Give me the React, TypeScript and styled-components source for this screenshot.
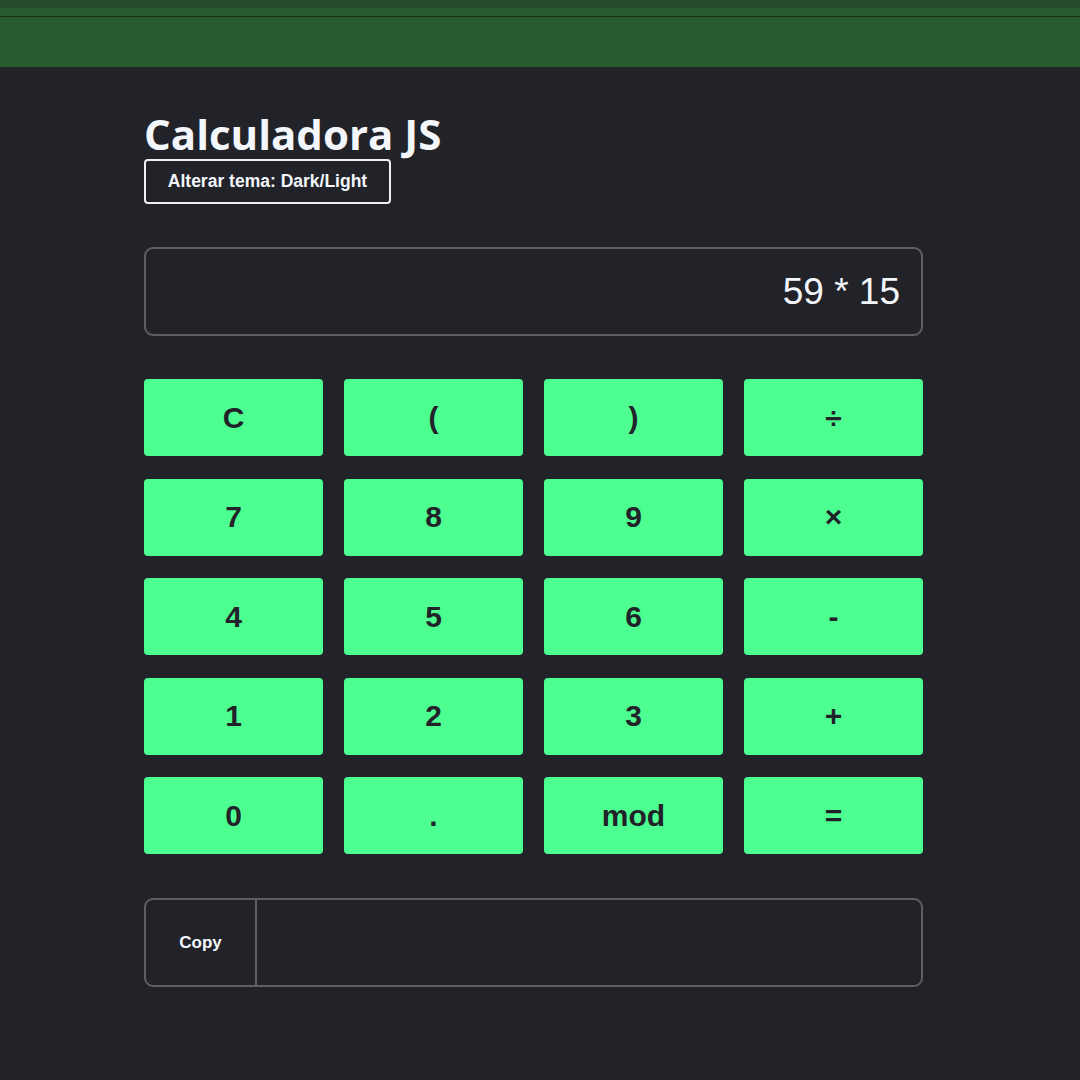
import React from "react";
import styled, { createGlobalStyle } from "styled-components";

const Global = createGlobalStyle`
  html, body { margin: 0; padding: 0; background: #212329; }
  body { font-family: "Liberation Sans", Arial, sans-serif; }
`;

const TopBar = styled.header`
  height: 67px;
  background: #285c2e;
  display: flex;
  flex-direction: column;
`;

const Strip = styled.div<{ $bg: string; $h: number }>`
  height: ${(p) => p.$h}px;
  background: ${(p) => p.$bg};
`;

const Main = styled.main`
  width: 779px;
  margin-left: 144px;
  padding-top: 44px;
  display: flex;
  flex-direction: column;
`;

const Title = styled.h1`
  margin: 0;
  font-family: "Open Sans", sans-serif;
  font-weight: 700;
  font-size: 42px;
  line-height: 46px;
  color: #f3f6fb;
  letter-spacing: 0;
`;

const ThemeButton = styled.button`
  align-self: flex-start;
  width: 247px;
  height: 45px;
  margin-top: 2px;
  background: transparent;
  border: 2px solid #f0f0f0;
  border-radius: 4px;
  color: #f3f6fb;
  font-family: "Liberation Sans", Arial, sans-serif;
  font-weight: 700;
  font-size: 17.5px;
  padding: 0;
  cursor: pointer;
`;

const Display = styled.div`
  margin-top: 43px;
  height: 89px;
  box-sizing: border-box;
  border: 2px solid #5e5f62;
  border-radius: 9px;
  display: flex;
  align-items: center;
  justify-content: flex-end;
  padding-right: 21px;
  color: #f3f6fb;
  font-size: 37px;
`;

const Keypad = styled.div`
  margin-top: 43px;
  display: grid;
  grid-template-columns: repeat(4, 179px);
  grid-auto-rows: 77px;
  column-gap: 21px;
  row-gap: 22.5px;
`;

const Key = styled.button`
  background: #4dff91;
  border: none;
  border-radius: 4px;
  color: #212329;
  font-family: "Liberation Sans", Arial, sans-serif;
  font-weight: 700;
  font-size: 30px;
  padding: 0;
  cursor: pointer;
`;

const CopyBox = styled.div`
  margin-top: 44px;
  height: 89px;
  box-sizing: border-box;
  border: 2px solid #5e5f62;
  border-radius: 9px;
  display: flex;
`;

const CopyButton = styled.button`
  width: 111px;
  background: transparent;
  border: none;
  border-right: 2px solid #5e5f62;
  color: #f3f6fb;
  font-family: "Liberation Sans", Arial, sans-serif;
  font-weight: 700;
  font-size: 17px;
  padding: 0;
  cursor: pointer;
`;

const Result = styled.div`
  flex: 1;
`;

const keys = ["C", "(", ")", "÷", "7", "8", "9", "×", "4", "5", "6", "-", "1", "2", "3", "+", "0", ".", "mod", "="];

export default function App() {
  return (
    <>
      <Global />
      <TopBar>
        <Strip $bg="#284a2d" $h={8} />
        <Strip $bg="#285c2f" $h={8} />
        <Strip $bg="#173319" $h={1} />
      </TopBar>
      <Main>
        <Title>Calculadora JS</Title>
        <ThemeButton>Alterar tema: Dark/Light</ThemeButton>
        <Display>59 * 15</Display>
        <Keypad>
          {keys.map((k) => (
            <Key key={k}>{k}</Key>
          ))}
        </Keypad>
        <CopyBox>
          <CopyButton>Copy</CopyButton>
          <Result />
        </CopyBox>
      </Main>
    </>
  );
}
